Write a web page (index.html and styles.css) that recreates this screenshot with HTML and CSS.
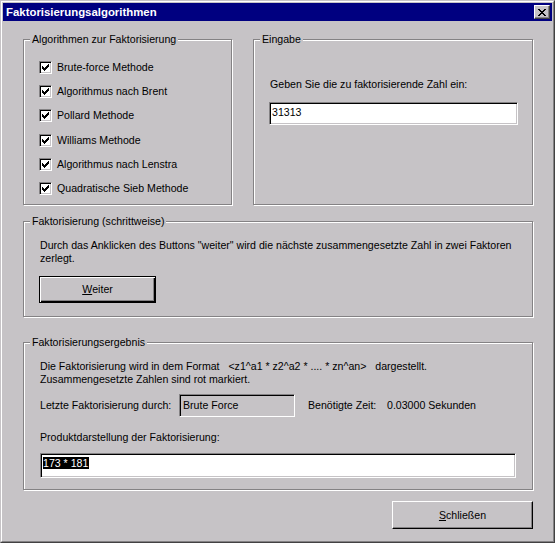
FILE: index.html
```html
<!DOCTYPE html>
<html lang="de">
<head>
<meta charset="utf-8">
<title>Faktorisierungsalgorithmen</title>
<link rel="stylesheet" href="styles.css">
</head>
<body>
<div class="window">
  <div class="window-inner">
    <div class="titlebar">
      <span class="title">Faktorisierungsalgorithmen</span>
      <button class="close-btn" aria-label="Schließen">
        <svg width="8" height="7" viewBox="0 0 8 7" shape-rendering="crispEdges"><path d="M0 0h2v1H0zM6 0h2v1H6zM1 1h2v1H1zM5 1h2v1H5zM2 2h4v1H2zM3 3h2v1H3zM2 4h4v1H2zM1 5h2v1H1zM5 5h2v1H5zM0 6h2v1H0zM6 6h2v1H6z" fill="#000"/></svg>
      </button>
    </div>
    <div class="content">
      <div class="top-row">
        <div class="group group-algos">
          <div class="group-title">Algorithmen zur Faktorisierung</div>
          <ul class="checklist">
            <li class="check-row"><span class="checkbox"><svg width="7" height="7" viewBox="0 0 7 7" shape-rendering="crispEdges"><path d="M6 0h1v1H6zM5 1h2v1H5zM0 2h1v1H0zM4 2h3v1H4zM0 3h2v1H0zM3 3h3v1H3zM0 4h5v1H0zM1 5h3v1H1zM2 6h1v1H2z" fill="#000"/></svg></span><span class="check-label">Brute-force Methode</span></li>
            <li class="check-row"><span class="checkbox"><svg width="7" height="7" viewBox="0 0 7 7" shape-rendering="crispEdges"><path d="M6 0h1v1H6zM5 1h2v1H5zM0 2h1v1H0zM4 2h3v1H4zM0 3h2v1H0zM3 3h3v1H3zM0 4h5v1H0zM1 5h3v1H1zM2 6h1v1H2z" fill="#000"/></svg></span><span class="check-label">Algorithmus nach Brent</span></li>
            <li class="check-row"><span class="checkbox"><svg width="7" height="7" viewBox="0 0 7 7" shape-rendering="crispEdges"><path d="M6 0h1v1H6zM5 1h2v1H5zM0 2h1v1H0zM4 2h3v1H4zM0 3h2v1H0zM3 3h3v1H3zM0 4h5v1H0zM1 5h3v1H1zM2 6h1v1H2z" fill="#000"/></svg></span><span class="check-label">Pollard Methode</span></li>
            <li class="check-row"><span class="checkbox"><svg width="7" height="7" viewBox="0 0 7 7" shape-rendering="crispEdges"><path d="M6 0h1v1H6zM5 1h2v1H5zM0 2h1v1H0zM4 2h3v1H4zM0 3h2v1H0zM3 3h3v1H3zM0 4h5v1H0zM1 5h3v1H1zM2 6h1v1H2z" fill="#000"/></svg></span><span class="check-label">Williams Methode</span></li>
            <li class="check-row"><span class="checkbox"><svg width="7" height="7" viewBox="0 0 7 7" shape-rendering="crispEdges"><path d="M6 0h1v1H6zM5 1h2v1H5zM0 2h1v1H0zM4 2h3v1H4zM0 3h2v1H0zM3 3h3v1H3zM0 4h5v1H0zM1 5h3v1H1zM2 6h1v1H2z" fill="#000"/></svg></span><span class="check-label">Algorithmus nach Lenstra</span></li>
            <li class="check-row"><span class="checkbox"><svg width="7" height="7" viewBox="0 0 7 7" shape-rendering="crispEdges"><path d="M6 0h1v1H6zM5 1h2v1H5zM0 2h1v1H0zM4 2h3v1H4zM0 3h2v1H0zM3 3h3v1H3zM0 4h5v1H0zM1 5h3v1H1zM2 6h1v1H2z" fill="#000"/></svg></span><span class="check-label">Quadratische Sieb Methode</span></li>
          </ul>
        </div>
        <div class="group group-input">
          <div class="group-title">Eingabe</div>
          <div class="input-body">
            <div class="field-label">Geben Sie die zu faktorisierende Zahl ein:</div>
            <div class="edit edit-number">31313</div>
          </div>
        </div>
      </div>

      <div class="group group-step">
        <div class="group-title">Faktorisierung (schrittweise)</div>
        <div class="step-body">
          <p class="text">Durch das Anklicken des Buttons "weiter" wird die nächste zusammengesetzte Zahl in zwei Faktoren zerlegt.</p>
          <button class="btn btn-default"><u>W</u>eiter</button>
        </div>
      </div>

      <div class="group group-result">
        <div class="group-title">Faktorisierungsergebnis</div>
        <div class="result-body">
          <p class="text">Die Faktorisierung wird in dem Format<span class="pre">   &lt;z1^a1 * z2^a2 * .... * zn^an&gt;   </span>dargestellt.<br>Zusammengesetzte Zahlen sind rot markiert.</p>
          <div class="info-row">
            <span class="info-label">Letzte Faktorisierung durch:</span>
            <span class="readonly">Brute Force</span>
            <span class="time-label">Benötigte Zeit:</span>
            <span class="time-value">0.03000 Sekunden</span>
          </div>
          <div class="field-label product-label">Produktdarstellung der Faktorisierung:</div>
          <div class="edit edit-product"><span class="selected">173 * 181</span></div>
        </div>
      </div>

      <div class="footer">
        <button class="btn btn-close"><u>S</u>chließen</button>
      </div>
    </div>
  </div>
</div>
</body>
</html>
```

FILE: styles.css
```css
* { box-sizing: border-box; }
html, body { margin: 0; padding: 0; }
body {
  background: #c6c3c6;
  font-family: "Liberation Sans", Arial, sans-serif;
  font-size: 10.6px;
  line-height: 13px;
  color: #000;
}
.window {
  width: 555px;
  height: 543px;
  border: 1px solid;
  border-color: #c6c3c6 #424142 #424142 #c6c3c6;
  background: #c6c3c6;
}
.window-inner {
  height: 100%;
  border: 1px solid;
  border-color: #fff #848284 #848284 #fff;
  padding: 1px;
  display: flex;
  flex-direction: column;
}
.titlebar {
  height: 18px;
  flex: none;
  background: #000080;
  display: flex;
  align-items: center;
  justify-content: space-between;
  padding: 0 2px 0 3px;
}
.title {
  color: #fff;
  font-weight: bold;
  font-size: 11.4px;
}
.close-btn {
  width: 16px;
  height: 14px;
  padding: 0;
  margin: 0;
  background: #c6c3c6;
  border: 1px solid;
  border-color: #fff #424142 #424142 #fff;
  box-shadow: inset -1px -1px 0 #848284;
  display: flex;
  align-items: center;
  justify-content: center;
}
.close-btn svg { display: block; }
.content {
  flex: 1;
  padding: 18px 19px 0 20px;
  display: flex;
  flex-direction: column;
}
.top-row {
  display: flex;
  gap: 21px;
}
.group {
  border: 1px solid #848284;
  box-shadow: inset 1px 1px 0 #fff, 1px 1px 0 #fff;
}
.group-title {
  width: fit-content;
  margin: -7px 0 0 6px;
  padding: 0 2px;
  background: #c6c3c6;
}
.group-algos { width: 209px; height: 166px; }
.group-input { flex: 1; }
.checklist {
  list-style: none;
  margin: 0;
  padding: 15px 0 0 15px;
  display: flex;
  flex-direction: column;
  gap: 11.2px;
}
.check-row {
  display: flex;
  align-items: center;
  height: 13px;
}
.checkbox {
  width: 13px;
  height: 13px;
  flex: none;
  background: #fff;
  border: 1px solid;
  border-color: #848284 #fff #fff #848284;
  box-shadow: inset 1px 1px 0 #000, inset -1px -1px 0 #c6c3c6;
  display: flex;
  align-items: center;
  justify-content: center;
}
.checkbox svg { display: block; }
.check-label { margin-left: 5px; }
.input-body { padding: 32px 0 0 15px; }
.field-label { padding-left: 1px; }
.edit {
  background: #fff;
  border: 1px solid;
  border-color: #848284 #fff #fff #848284;
  box-shadow: inset 1px 1px 0 #000, inset -1px -1px 0 #c6c3c6;
}
.edit-number {
  margin-top: 11px;
  width: 249px;
  height: 23px;
  padding: 3px 1px 0 2px;
}
.group-step { margin-top: 16px; height: 96px; }
.step-body { padding: 11px 10px 0 15px; }
.text { margin: 0; padding-left: 1px; }
.btn {
  font: inherit;
  color: #000;
  background: #c6c3c6;
  padding: 0;
  margin: 0;
  display: flex;
  align-items: center;
  justify-content: center;
}
.btn-default {
  margin-top: 11px;
  width: 117px;
  height: 27px;
  border: 1px solid #000;
  box-shadow: inset 1px 1px 0 #fff, inset -1px -1px 0 #000, inset -2px -2px 0 #848284;
}
.group-result { margin-top: 25px; height: 148px; }
.result-body { padding: 11px 10px 0 15px; }
.pre { white-space: pre; }
.info-row {
  margin-top: 8px;
  display: flex;
  align-items: center;
  height: 23px;
}
.info-label { width: 140px; padding-left: 1px; flex: none; }
.readonly {
  width: 116px;
  height: 23px;
  flex: none;
  border: 1px solid;
  border-color: #848284 #fff #fff #848284;
  box-shadow: inset 1px 1px 0 #000, inset -1px -1px 0 #c6c3c6;
  padding: 4px 0 0 3px;
}
.time-label { margin-left: 13px; width: 79px; flex: none; }
.product-label { margin-top: 14px; }
.edit-product {
  margin: 9px 0 0 1px;
  width: 476px;
  height: 25px;
  padding: 3px 0 0 2px;
}
.selected {
  display: inline-block;
  background: #000;
  color: #fff;
  line-height: 12px;
  padding: 0 1px 0 0;
}
.footer {
  margin-top: 11px;
  display: flex;
  justify-content: flex-end;
}
.btn-close {
  width: 141px;
  height: 28px;
  border: 1px solid;
  border-color: #fff #000 #000 #fff;
  box-shadow: inset -1px -1px 0 #848284;
}
```
